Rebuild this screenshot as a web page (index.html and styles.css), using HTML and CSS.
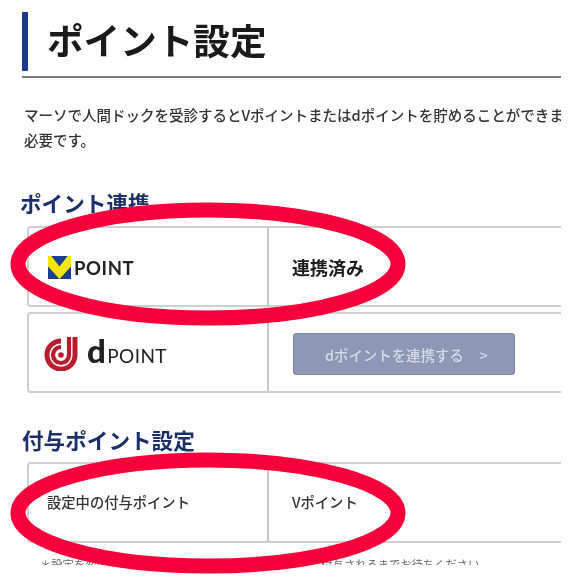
FILE: index.html
```html
<!DOCTYPE html>
<html lang="ja">
<head>
<meta charset="utf-8">
<title>ポイント設定</title>
<link rel="stylesheet" href="styles.css">
</head>
<body>
<div class="shot">
  <main class="page">
    <h1 class="title"><span class="title-bar"></span><span class="title-text">ポイント設定</span></h1>
    <p class="lead">マーソで人間ドックを受診するとVポイントまたはdポイントを貯めることができます。<br>必要です。</p>

    <h2 class="section section-link">ポイント連携</h2>
    <div class="rows">
      <div class="row">
        <div class="cell-label">
          <svg class="v-mark" viewBox="0 0 24 24" aria-hidden="true">
            <rect width="24" height="24" fill="#1c3f94"/>
            <path d="M0 0H3.5L12 11L20.5 0H24V11L12 24L0 11Z" fill="#f6e500"/>
          </svg>
          <span class="v-word">POINT</span>
        </div>
        <div class="cell-value strong">連携済み</div>
      </div>
      <div class="row">
        <div class="cell-label">
          <svg class="d-mark" viewBox="0 0 34 34" aria-hidden="true">
            <path d="M17 4A14 14 0 1 0 31 18V0" fill="none" stroke="#b81c2e" stroke-width="5"/>
            <path d="M17 10A8 8 0 1 0 25 18V0" fill="none" stroke="#b81c2e" stroke-width="4.2"/>
            <circle cx="17" cy="18" r="2.8" fill="#b81c2e"/>
          </svg>
          <span class="d-word"><b>d</b>POINT</span>
        </div>
        <div class="cell-value"><a class="link-btn" href="#"><span>dポイントを連携する</span><span>&gt;</span></a></div>
      </div>
    </div>

    <h2 class="section section-grant">付与ポイント設定</h2>
    <div class="row row-grant">
      <div class="cell-label grant-label">設定中の付与ポイント</div>
      <div class="cell-value grant-value">Vポイント</div>
    </div>
    <p class="note">＊設定を変更した場合、次回の受診から反映されます。付与されるまでお待ちください。</p>
  </main>
  <svg class="marks" viewBox="0 0 579 586" aria-hidden="true">
    <ellipse cx="208" cy="264" rx="190" ry="54" />
    <ellipse cx="208" cy="513" rx="190" ry="53" />
  </svg>
</div>
</body>
</html>
```
FILE: styles.css
```css
* { box-sizing: border-box; }
html, body { margin: 0; padding: 0; background: #fff; }
body { font-family: "Noto Sans CJK JP", "Liberation Sans", sans-serif; color: #222; }

.shot { position: relative; width: 579px; height: 586px; overflow: hidden; background: #fff; }
.page { width: 561px; height: 565px; overflow: hidden; padding: 12px 0 0 22px; filter: blur(0.6px); }

.title { display: flex; align-items: flex-start; gap: 19px; margin: 0; height: 66px;
  border-bottom: 2px solid #7b7b7b; font-size: 36.6px; line-height: 44px; font-weight: 700; color: #1a1a1a; }
.title-bar { width: 6px; height: 59px; background: #1c3a8c; border-radius: 1px; }
.title-text { margin-top: 6px; }

.lead { margin: 24px 0 0 2px; width: 600px; font-size: 14.5px; line-height: 25px; font-weight: 500; color: #333; white-space: nowrap; }

.section { margin: 0; font-size: 21.6px; line-height: 28px; font-weight: 700; color: #1b2f6b; }
.section-link { margin: 37px 0 0 -2px; }
.section-grant { margin: 33px 0 0 0; }

.rows { display: flex; flex-direction: column; gap: 5px; margin-top: 9px; }
.row { display: flex; width: 640px; height: 81px; margin-left: 5px; border: 2px solid #cfcfcf; border-radius: 4px; }
.row-grant { margin-top: 8px; }

.cell-label { display: flex; align-items: center; width: 240px; height: 100%; padding: 2px 0 0 19px; border-right: 2px solid #c6c6c6; flex: none; }
.cell-value { display: flex; align-items: center; padding: 0 0 0 23px; font-size: 18px; }
.strong { font-weight: 700; color: #1c1c1c; }

.v-mark { width: 23px; height: 23px; flex: none; }
.v-word { margin-left: 3px; font-family: "Lato", "Liberation Sans", sans-serif; font-size: 18.5px; font-weight: 700; letter-spacing: 0.6px; color: #222; }

.d-mark { width: 34px; height: 34px; flex: none; margin-left: -4px; }
.d-word { margin-left: 9px; font-family: "Lato", "Liberation Sans", sans-serif; font-size: 19px; letter-spacing: 0.4px; color: #222; }
.d-word b { margin-right: 1px; font-size: 33px; line-height: 20px; font-weight: 900; }

.link-btn { display: flex; align-items: center; gap: 16px; width: 222px; height: 42px; margin: 3px 0 0 1px; padding-left: 31px;
  background: #8e97b5; border: 1px solid #7d87a8; border-radius: 3px; color: #d6dae7; font-size: 14.4px; font-weight: 500; text-decoration: none; }

.grant-label { align-items: flex-start; padding: 27px 0 0 18px; font-size: 14.3px; font-weight: 500; color: #333; }
.grant-value { align-items: flex-start; padding: 27px 0 0 23px; font-size: 14.3px; font-weight: 500; color: #333; }

.note { margin: 12px 0 0 18px; width: 600px; font-size: 11.3px; line-height: 18px; color: #666; white-space: nowrap; }

.marks { position: absolute; inset: 0; width: 579px; height: 586px; }
.marks ellipse { fill: none; stroke: #f5003a; stroke-width: 15; }
```
